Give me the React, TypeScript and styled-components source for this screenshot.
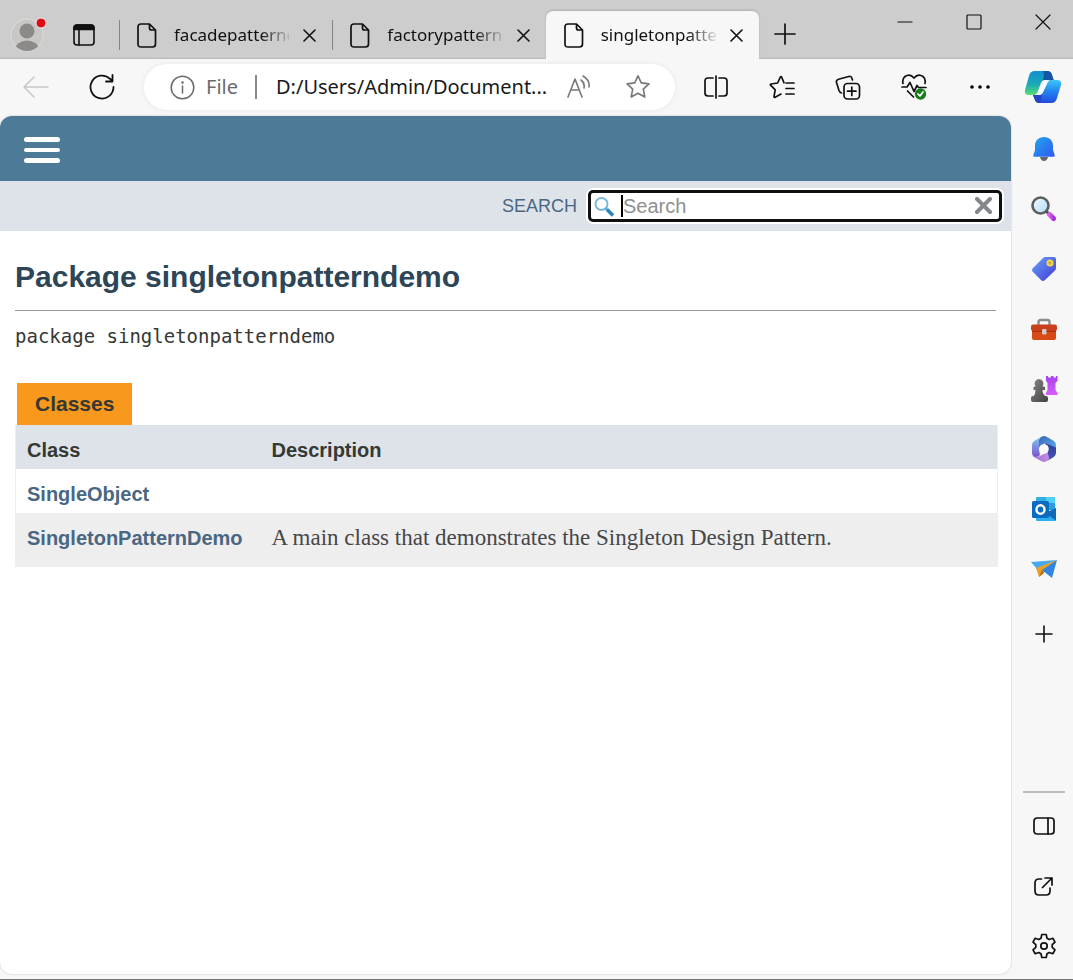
import React from "react";
import styled, { createGlobalStyle, css } from "styled-components";

const ui = `"Noto Sans", "Open Sans", sans-serif`;
const sans = `"Liberation Sans", Arial, sans-serif`;

const GlobalStyle = createGlobalStyle`
  *, *::before, *::after { box-sizing: border-box; }
  body { margin: 0; background: #f7f7f7; font-family: ${ui}; }
  button { border: 0; padding: 0; background: none; color: inherit; font: inherit; }
  svg { display: block; flex: none; }
`;

const Browser = styled.div`
  display: flex;
  flex-direction: column;
  min-height: 100vh;
  border-bottom: 1px solid #777;
`;

const TitleBar = styled.header`
  display: flex;
  height: 59px;
  background: #cdcdcd;
  box-shadow: inset 0 -2px 1px -1px #b8b8b8;
`;

const TitleTools = styled.div`
  display: flex;
  align-items: center;
  gap: 27px;
  width: 119px;
  padding: 10px 0 0 10px;
  flex: none;
`;

const IconButton = styled.button`
  display: flex;
  align-items: center;
  justify-content: center;
`;

const Tabs = styled.nav`
  display: flex;
  flex: 0 1 640px;
  min-width: 0;
  padding-top: 11px;
`;

const Tab = styled.div<{ $active?: boolean }>`
  position: relative;
  display: flex;
  align-items: center;
  flex: 1 1 0;
  min-width: 0;
  padding: 0 16px 0 18px;
  ${(p) =>
    p.$active
      ? css`
          background: #f7f7f7;
          border-radius: 7px 7px 0 0;
          box-shadow: 0 -1px 2px #adadad;
          clip-path: inset(-3px -3px 0 -3px);
        `
      : css`
          &::before {
            content: "";
            position: absolute;
            left: 0;
            top: 9px;
            height: 30px;
            border-left: 1px solid #858585;
          }
        `}
`;

const TabTitle = styled.span`
  flex: 1;
  min-width: 0;
  margin: 0 14px 0 17px;
  overflow: hidden;
  white-space: nowrap;
  font-size: 17px;
  line-height: 28px;
  color: #111;
  mask-image: linear-gradient(to right, #000 75%, transparent 103%);
`;

const NewTab = styled(IconButton)`
  width: 51px;
  padding-top: 9px;
`;

const WindowControls = styled.div`
  display: flex;
  margin: 0 -4px 0 auto;
`;

const WindowButton = styled(IconButton)`
  width: 69px;
  height: 44px;
`;

const Toolbar = styled.div`
  display: flex;
  align-items: center;
  height: 57px;
  padding: 0 0 1px 3px;
`;

const ToolButton = styled(IconButton)`
  width: 66px;
  height: 56px;
  flex: none;
`;

const CopilotButton = styled(IconButton)`
  width: 60px;
  flex: none;
`;

const AddressBar = styled.div`
  display: flex;
  align-items: center;
  flex: 1;
  min-width: 0;
  height: 46px;
  margin: 0 8px 0 9px;
  padding: 0 24px 0 26px;
  border-radius: 23px;
  background: #fff;
  box-shadow: 0 0 5px #e6e6e6;
  font-size: 20px;
`;

const Scheme = styled.label`
  margin-left: 11px;
  padding-right: 17px;
  border-right: 2px solid #8a8a8a;
  line-height: 24px;
  color: #6b6b6b;
`;

const AddressInput = styled.input`
  flex: 1;
  min-width: 0;
  margin: 0 20px 0 19px;
  padding: 0;
  border: 0;
  outline: 0;
  background: none;
  color: #1a1a1a;
  font: 20px/28px ${ui};
`;

const AddressActions = styled.div`
  display: flex;
  gap: 33px;
`;

const Workspace = styled.div`
  display: flex;
  flex: 1;
`;

const Page = styled.main`
  flex: 1;
  min-width: 0;
  margin-bottom: 5px;
  overflow: hidden;
  border-radius: 12px;
  background: #fff;
  box-shadow: 0 0 2px #bbb;
  font-family: ${sans};
  color: #353833;
`;

const TopNav = styled.nav`
  display: flex;
  align-items: center;
  height: 65px;
  padding: 3px 24px 0;
  background: #4d7a97;
`;

const MenuButton = styled.button`
  display: flex;
  flex-direction: column;
  gap: 6px;
  width: 36px;
`;

const MenuBar = styled.span`
  width: 100%;
  height: 5px;
  border-radius: 3px;
  background: #fff;

  &:nth-child(2) {
    height: 4px;
  }
`;

const SubNav = styled.form`
  display: flex;
  align-items: center;
  justify-content: flex-end;
  gap: 11px;
  height: 50px;
  padding: 0 9px;
  background: #dee3e9;
`;

const SearchLabel = styled.label`
  font-size: 18px;
  color: #4a6782;
`;

const SearchBox = styled.div`
  position: relative;
  display: flex;
  align-items: center;
  flex: 0 1 414px;
  height: 32px;
  padding: 0 6px 0 3px;
  border: 3px solid #101010;
  border-radius: 5px;
  background: #fff;
  box-shadow: 0 0 0 2px #fff;
`;

const SearchInput = styled.input`
  flex: 1;
  min-width: 0;
  padding: 0 0 0 8px;
  border: 0;
  outline: 0;
  background: none;
  font: 20px/24px ${sans};
  &::placeholder { color: #909090; opacity: 1; }
`;

const Caret = styled.span`
  position: absolute;
  left: 30px;
  top: 2px;
  width: 2px;
  height: 22px;
  background: #000;
`;

const Content = styled.section`
  padding: 28px 13px 40px 15px;
`;

const Title = styled.h1`
  margin: 0 2px 0 0;
  padding-bottom: 15px;
  border-bottom: 1px solid #999;
  font-size: 30px;
  line-height: 36px;
  color: #2c4557;
`;

const Signature = styled.code`
  display: block;
  margin-top: 12px;
  font: 19px/26px "DejaVu Sans Mono", monospace;
`;

const TableTab = styled.button`
  display: block;
  height: 42px;
  margin: 34px 0 0 2px;
  padding: 0 18px;
  background: #f8981d;
  color: #353833;
  font: bold 21px/42px ${sans};
`;

const ClassTable = styled.table`
  width: 100%;
  border-collapse: collapse;
  border: 1px solid #eee;
  border-top: 0;
`;

const Row = styled.tr<{ $height: number; $fill: string }>`
  height: ${(p) => p.$height}px;
  background: ${(p) => p.$fill};
`;

const HeadCell = styled.th<{ $width?: number }>`
  width: ${(p) => (p.$width ? `${p.$width}px` : "auto")};
  padding: 13px 0 7px 11px;
  text-align: left;
  font-size: 20px;
  line-height: 24px;
`;

const NameCell = styled(HeadCell)`
  vertical-align: top;
`;

const ClassLink = styled.a`
  color: #4a6782;
  text-decoration: none;
`;

const TextCell = styled.td`
  padding: 13px 0 7px 11px;
  vertical-align: top;
  font: 23px/24px Georgia, "Liberation Serif", serif;
  color: #474747;
`;

const Sidebar = styled.aside`
  display: flex;
  flex-direction: column;
  align-items: center;
  width: 62px;
  flex: none;
  padding: 3px 0 3px 3px;
`;

const SideButton = styled(IconButton)`
  width: 56px;
  height: 60px;
  flex: none;
`;

const AddButton = styled(SideButton)`
  margin-top: 5px;
`;

const SideRule = styled.hr`
  width: 42px;
  height: 2px;
  margin: auto 0 3px;
  border: 0;
  background: #bdbdbd;
`;

const Line = ({ w, h, sw = 1.6, color = "#111", children }: {
  w: number; h: number; sw?: number; color?: string; children: React.ReactNode;
}) => (
  <svg width={w} height={h} viewBox={`0 0 ${w} ${h}`} fill="none" stroke={color}
    strokeWidth={sw} strokeLinecap="round" strokeLinejoin="round" aria-hidden="true">
    {children}
  </svg>
);

const Avatar = () => (
  <svg width="36" height="36" viewBox="0 0 36 36" aria-hidden="true">
    <clipPath id="face"><circle cx="17" cy="18" r="16" /></clipPath>
    <circle cx="17" cy="18" r="16" fill="#c9c7c5" stroke="#d8d6d3" strokeWidth="1.4" />
    <g clipPath="url(#face)" fill="#8b8a88">
      <circle cx="17" cy="14" r="7.5" />
      <ellipse cx="17" cy="33" rx="12" ry="9.5" />
    </g>
    <circle cx="31" cy="6" r="5" fill="#dc0a14" stroke="#eee" strokeWidth="1" />
  </svg>
);

const Workspaces = () => (
  <Line w={22} h={22} sw={1.6}>
    <rect x="1" y="1" width="20" height="20" rx="3" />
    <path d="M1 5.500V4q0-3 3-3h14q3 0 3 3v1.500z" fill="#111" />
    <path d="M6 6v15" />
  </Line>
);

const FileIcon = () => (
  <Line w={20} h={25} sw={1.7}>
    <path d="M4 1h8.500L18.500 7v14q0 3-3 3H4q-3 0-3-3V4q0-3 3-3zM12.500 1v4q0 2 2 2h4" />
  </Line>
);

const CloseIcon = () => <Line w={13} h={13} sw={1.6}><path d="M1 1l11 11M12 1L1 12" /></Line>;

const Bell = () => (
  <svg width="24" height="26" viewBox="0 0 24 26" aria-hidden="true">
    <defs><linearGradient id="bell" x1="0" y1="0" x2="1" y2="1"><stop stopColor="#20a8f0" /><stop offset="1" stopColor="#3157ee" /></linearGradient></defs>
    <path d="M8 21h8q-1 4-4 4t-4-4z" fill="#666" />
    <path d="M12 1C6.500 1 3 5 3 9.500V14L1.300 19q-.7 1.800 1.200 1.800h19q1.900 0 1.200-1.800L21 14V9.500C21 5 17.500 1 12 1z" fill="url(#bell)" />
  </svg>
);

const Magnifier = () => (
  <svg width="26" height="26" viewBox="0 0 26 26" aria-hidden="true">
    <defs><linearGradient id="handle"><stop stopColor="#e05cf0" /><stop offset="1" stopColor="#a431e0" /></linearGradient>
      <linearGradient id="glass" x2="1" y2="1"><stop stopColor="#eef8ff" /><stop offset="1" stopColor="#b3dcf8" /></linearGradient></defs>
    <path d="M15 15l3 3" stroke="#444" strokeWidth="3" />
    <path d="M18.500 18.500l4 4" stroke="url(#handle)" strokeWidth="5" strokeLinecap="round" />
    <circle cx="9.500" cy="9.500" r="8" fill="url(#glass)" stroke="#5b605f" strokeWidth="2.600" />
  </svg>
);

const Tag = () => (
  <svg width="26" height="26" viewBox="0 0 26 26" aria-hidden="true">
    <defs><linearGradient id="tag" x2="1" y2="1"><stop stopColor="#6aa4ff" /><stop offset="1" stopColor="#4038cf" /></linearGradient></defs>
    <path d="M12 2q1-1 2.500-1H23q2 0 2 2v9q0 1.500-1 2.500L14 24q-2 2-4 0l-8-8q-2-2 0-4z" fill="url(#tag)" />
    <circle cx="19" cy="7" r="2.600" fill="#c9a84a" stroke="#f8d743" strokeWidth="1.800" />
  </svg>
);

const Toolbox = () => (
  <svg width="28" height="23" viewBox="0 0 28 23" aria-hidden="true">
    <path d="M8.500 7V4q0-2 2-2h7q2 0 2 2v3" fill="none" stroke="#8b8b8d" strokeWidth="2.400" />
    <path d="M2 12h24v8q0 2-2 2H4q-2 0-2-2z" fill="#d94b16" />
    <path d="M3 6.500h22q2 0 2 2V11q0 2-2 2H3q-2 0-2-2V8.500q0-2 2-2z" fill="#c9401a" />
    <path d="M2 13h24v1H2z" fill="#a52d12" />
    <rect x="12" y="11" width="4.500" height="5.500" rx="1" fill="#cfcac5" />
  </svg>
);

const Chess = () => (
  <svg width="28" height="28" viewBox="0 0 28 28" aria-hidden="true">
    <defs><linearGradient id="rook" x2="0" y2="1"><stop stopColor="#a843ee" /><stop offset="1" stopColor="#d75ef8" /></linearGradient>
      <linearGradient id="pawn" x2="1" y2="1"><stop stopColor="#888" /><stop offset="1" stopColor="#414141" /></linearGradient></defs>
    <path d="M16 1h2v1.500h3V1h2.500v1.500h2.500V1h1.500v5l-2 2v7l2 3v2H16v-2l1.500-3V8l-1.500-2z" fill="url(#rook)" />
    <path d="M9 4a4.500 4.500 0 0 1 3.500 7.200L15 12v3h-2.500q0 4 3 6h.5q2 0 2 2v2q0 2-2 2H3q-2 0-2-2v-2q0-2 2-2h.5q2-2 2-6H3.500v-3l2-.8A4.500 4.500 0 0 1 9 4z" fill="url(#pawn)" />
  </svg>
);

const Microsoft365 = () => (
  <svg width="26" height="28" viewBox="0 0 26 28" aria-hidden="true">
    <defs>
      <linearGradient id="m1" x2="1" y2="1"><stop stopColor="#3464b4" /><stop offset="1" stopColor="#5fb0f2" /></linearGradient>
      <linearGradient id="m2" x2="1"><stop stopColor="#9a6fd8" /><stop offset="1" stopColor="#c58be0" /></linearGradient>
      <linearGradient id="m3" x2="0" y2="1"><stop stopColor="#80c8f6" /><stop offset="1" stopColor="#7a55cb" /></linearGradient>
      <linearGradient id="m4" x2="0" y2="1"><stop stopColor="#283d94" /><stop offset="1" stopColor="#4d55c0" /></linearGradient>
    </defs>
    <path d="M10.500 1.700q2.500-1.300 5 0l7 4Q25 7.200 25 10v4l-11-6-6 5V5q0-2 2.500-3.300z" fill="url(#m1)" />
    <path d="M10.500 1.700l-7 4Q1 7.200 1 10v8q0 2.500 2 3.800 4 1 6-1.800l-1-6V5q0-2 2.500-3.300z" fill="url(#m3)" />
    <path d="M1.500 20.500q4 2.500 7.500.5l9-5v6.500q0 2-2.500 3.800-2.500 1.300-5 0l-7-4q-1.500-.8-2-1.800z" fill="url(#m2)" />
    <path d="M14 8l11 4.500V18q0 2.800-2.500 4.300l-7 4q2.500-1.800 2.500-3.800z" fill="url(#m4)" />
    <circle cx="13" cy="14" r="4.800" fill="#fafafa" />
  </svg>
);

const Outlook = () => (
  <svg width="26" height="26" viewBox="0 0 26 26" aria-hidden="true">
    <path d="M6 1h17q1 0 1 1v12H5V2q0-1 1-1z" fill="#33afe8" />
    <path d="M15 1h9v6h-9z" fill="#53d0f5" /><path d="M15 7h9v7h-9z" fill="#2a9fe0" />
    <path d="M5 12l10 5 10-5v12q0 1-1 1H6q-1 0-1-1z" fill="#2ab0ec" />
    <path d="M25 12v12.500L14 17z" fill="#1268b5" />
    <rect x="1" y="5" width="17" height="17" rx="1.500" fill="#0b6bc0" />
    <ellipse cx="9.500" cy="13.500" rx="4" ry="4.300" fill="none" stroke="#fff" strokeWidth="2.400" />
  </svg>
);

const Plane = () => (
  <svg width="28" height="20" viewBox="0 0 28 20" aria-hidden="true">
    <path d="M1 3L27 1 7 10z" fill="#46a9ef" />
    <path d="M6 9L27 1 9 18z" fill="#e8a126" />
    <path d="M27 1L12 11l10 8z" fill="#2f86e2" />
    <path d="M12 11l-3 7 5-4z" fill="#b56c18" />
  </svg>
);

const Copilot = () => (
  <svg width="38" height="34" viewBox="0 0 38 34" aria-hidden="true">
    <defs>
      <linearGradient id="c1" x2="0" y2="1"><stop stopColor="#128fd3" /><stop offset=".55" stopColor="#19a9b5" /><stop offset="1" stopColor="#5bdc76" /></linearGradient>
      <linearGradient id="c2" x2="0" y2="1"><stop stopColor="#3cc6f8" /><stop offset=".5" stopColor="#2483ef" /><stop offset="1" stopColor="#1f4be0" /></linearGradient>
    </defs>
    <path d="M11 1h12q4 0 5 4l2 6h-8q-3 0-4 3l-4 8q-1 3-4 3H5q-5 0-4-5L5 6q1-5 6-5z" fill="url(#c1)" />
    <path d="M19 1h4q4 0 5 4l2 6h-8q-3 0-4 2l2-7q0-3-1-5z" fill="#1356a4" />
    <path d="M27 33H15q-3 0-4-3l-2-5h6q3 0 4-3l4-8q1-4 4-4h6q5 0 4 5l-4 13q-1 5-6 5z" fill="url(#c2)" />
    <path d="M15 33q-3 0-4-3l-2-5h6q2 0 3-1l-1 6q0 3-2 3z" fill="#2544c6" />
    <path d="M21 10h5q-2 1-3 3l-4 9q-1 3-4 3h-4q2-1 3-4l3-8q1-3 4-3z" fill="#f7fcff" />
  </svg>
);

const tabs = [
  { title: "facadepatterndemo" },
  { title: "factorypatterndemo" },
  { title: "singletonpatterndemo", active: true },
];

const tools = [
  { label: "Split screen", icon: <Line w={24} h={24} sw={1.7}><path d="M12 1v22M9 3H4Q1 3 1 6v12q0 3 3 3h5M15 3h5q3 0 3 3v12q0 3-3 3h-5" /></Line> },
  { label: "Favorites", icon: <Line w={26} h={24} sw={1.7}><path d="M17 8h8M17 13.500h8M17 19h8M15 7.800l-2.300-5.600q-.7-1.200-1.400 0L8.600 8 2 9q-1.200.3-.4 1.200l4.600 4.600L5 21.500q0 1.400 1.200.8l5.800-3.200" /></Line> },
  { label: "Collections", icon: <Line w={26} h={25} sw={1.7}><path d="M17.500 5l-.5-1.500q-.7-2.700-3.200-2L3.500 4.200Q.8 5 1.500 7.500L4 15.500q.8 2.200 2.500 2.500" /><rect x="9" y="8.500" width="15.500" height="15.500" rx="3.500" /><path d="M16.800 12v8.500M12.500 16.200H21" /></Line> },
  { label: "Browser essentials", icon: (
    <Line w={26} h={26} sw={1.7}>
      <path d="M2 9.500q-1-4.500 2-7 5-3.500 9 1.500 4-5 9-1.500 3 2.500 2 7M1 13h5l3-4.500 4 9 3-6 1.500 2H25M6.500 17l6 6" />
      <circle cx="19.500" cy="20" r="5.700" fill="#187c18" stroke="none" /><path d="M17 20l2 2 3-4" stroke="#fff" />
    </Line>
  ) },
  { label: "Settings and more", icon: <svg width="22" height="6" viewBox="0 0 22 6" aria-hidden="true"><circle cx="3" cy="3" r="1.800" /><circle cx="11" cy="3" r="1.800" /><circle cx="19" cy="3" r="1.800" /></svg> },
];

const sideApps = [
  { label: "Notifications", icon: <Bell /> },
  { label: "Search the web", icon: <Magnifier /> },
  { label: "Shopping", icon: <Tag /> },
  { label: "Tools", icon: <Toolbox /> },
  { label: "Games", icon: <Chess /> },
  { label: "Microsoft 365", icon: <Microsoft365 /> },
  { label: "Outlook", icon: <Outlook /> },
  { label: "Drop", icon: <Plane /> },
];

const sideTools = [
  { label: "Hide sidebar", icon: <Line w={22} h={18} sw={1.7}><rect x="1" y="1" width="20" height="16" rx="3" /><path d="M15 1v16" /></Line> },
  { label: "Open in new window", icon: <Line w={19} h={19} sw={1.7}><path d="M7.500 2H5Q1 2 1 6v8q0 4 4 4h7q4 0 4-4v-3M8.500 10.500L18 1M11 1h7v7" /></Line> },
  { label: "Sidebar settings", icon: (
    <Line w={26} h={26} sw={1.7}>
      <path d="M10.800 1.500h4.400l.8 3.700 2.200 1.300 3.600-1.200L24 9.100l-2.800 2.600v2.600l2.800 2.600-2.200 3.800-3.600-1.200-2.200 1.300-.8 3.700h-4.400l-.8-3.700-2.200-1.300-3.600 1.200L2 16.900l2.800-2.600v-2.600L2 9.100l2.200-3.800 3.600 1.200L10 5.200z" />
      <circle cx="13" cy="13" r="3.200" />
    </Line>
  ) },
];

export default function App() {
  return (
    <>
      <GlobalStyle />
      <Browser>
        <TitleBar>
          <TitleTools>
            <IconButton aria-label="Profile"><Avatar /></IconButton>
            <IconButton aria-label="Workspaces"><Workspaces /></IconButton>
          </TitleTools>
          <Tabs aria-label="Open tabs">
            {tabs.map((t) => (
              <Tab key={t.title} $active={t.active}>
                <FileIcon />
                <TabTitle>{t.title}</TabTitle>
                <IconButton aria-label={`Close ${t.title}`}><CloseIcon /></IconButton>
              </Tab>
            ))}
          </Tabs>
          <NewTab aria-label="New tab"><Line w={22} h={22} sw={1.7}><path d="M11 1v20M1 11h20" /></Line></NewTab>
          <WindowControls>
            <WindowButton aria-label="Minimize"><Line w={16} h={16} sw={1.2}><path d="M1 8h14" /></Line></WindowButton>
            <WindowButton aria-label="Maximize"><Line w={16} h={16} sw={1.2}><rect x="1" y="1" width="14" height="14" rx="1" /></Line></WindowButton>
            <WindowButton aria-label="Close window"><Line w={16} h={16} sw={1.2}><path d="M1 1l14 14M15 1L1 15" /></Line></WindowButton>
          </WindowControls>
        </TitleBar>

        <Toolbar>
          <ToolButton aria-label="Back"><Line w={26} h={22} sw={1.5} color="#c8c8c8"><path d="M11 1L1 11l10 10M1 11h24" /></Line></ToolButton>
          <ToolButton aria-label="Refresh"><Line w={26} h={26} sw={1.8}><path d="M24.500 13A11.500 11.500 0 1 1 21 4.800L23.500 7M23.500 1v6.500H17" /></Line></ToolButton>
          <AddressBar>
            <Line w={25} h={25} sw={1.5} color="#6b6b6b"><circle cx="12.500" cy="12.500" r="11.300" /><path d="M12.500 11v7" /><circle cx="12.500" cy="7.500" r=".6" /></Line>
            <Scheme htmlFor="address">File</Scheme>
            <AddressInput id="address" readOnly value="D:/Users/Admin/Document..." />
            <AddressActions>
              <IconButton aria-label="Read aloud"><Line w={25} h={24} sw={1.6} color="#777"><path d="M1 22L8 4l7 18M4 15h8M14 5q4 3 3 8M16 1q7 4 6 11" /></Line></IconButton>
              <IconButton aria-label="Add to favorites"><Line w={26} h={26} sw={1.6} color="#777"><path d="M13 1.800l3.300 7.100 7.700 1-5.700 5.300 1.500 7.800-6.800-3.800-6.800 3.800 1.500-7.800L2 9.900l7.700-1z" /></Line></IconButton>
            </AddressActions>
          </AddressBar>
          {tools.map((t) => <ToolButton key={t.label} aria-label={t.label}>{t.icon}</ToolButton>)}
          <CopilotButton aria-label="Copilot"><Copilot /></CopilotButton>
        </Toolbar>

        <Workspace>
          <Page>
            <TopNav>
              <MenuButton aria-label="Toggle navigation"><MenuBar /><MenuBar /><MenuBar /></MenuButton>
            </TopNav>
            <SubNav>
              <SearchLabel htmlFor="search">SEARCH</SearchLabel>
              <SearchBox>
                <svg width="21" height="21" viewBox="0 0 20 21" fill="none" aria-hidden="true">
                  <circle cx="7" cy="8" r="6" stroke="#7db8e2" strokeWidth="2" />
                  <path d="M11 12l2 2" stroke="#5aa0cf" strokeWidth="2" />
                  <path d="M12.500 13.500l6 6" stroke="#2c86bb" strokeWidth="3.500" />
                </svg>
                <SearchInput id="search" placeholder="Search" />
                <Caret />
                <IconButton type="button" aria-label="Clear search">
                  <Line w={19} h={18} sw={4} color="#84888c"><path d="M3 2l13 13M16 2L3 15" /></Line>
                </IconButton>
              </SearchBox>
            </SubNav>
            <Content>
              <Title>Package singletonpatterndemo</Title>
              <Signature>package singletonpatterndemo</Signature>
              <TableTab>Classes</TableTab>
              <ClassTable>
                <thead>
                  <Row $height={44} $fill="#dee3e9">
                    <HeadCell scope="col" $width={245}>Class</HeadCell>
                    <HeadCell scope="col">Description</HeadCell>
                  </Row>
                </thead>
                <tbody>
                  <Row $height={44} $fill="#fff">
                    <NameCell scope="row"><ClassLink href="#SingleObject">SingleObject</ClassLink></NameCell>
                    <TextCell />
                  </Row>
                  <Row $height={53} $fill="#eeeeef">
                    <NameCell scope="row"><ClassLink href="#SingletonPatternDemo">SingletonPatternDemo</ClassLink></NameCell>
                    <TextCell>A main class that demonstrates the Singleton Design Pattern.</TextCell>
                  </Row>
                </tbody>
              </ClassTable>
            </Content>
          </Page>
          <Sidebar aria-label="Sidebar">
            {sideApps.map((a) => <SideButton key={a.label} aria-label={a.label}>{a.icon}</SideButton>)}
            <AddButton aria-label="Customize"><Line w={18} h={18} sw={1.6}><path d="M9 1v16M1 9h16" /></Line></AddButton>
            <SideRule />
            {sideTools.map((a) => <SideButton key={a.label} aria-label={a.label}>{a.icon}</SideButton>)}
          </Sidebar>
        </Workspace>
      </Browser>
    </>
  );
}
